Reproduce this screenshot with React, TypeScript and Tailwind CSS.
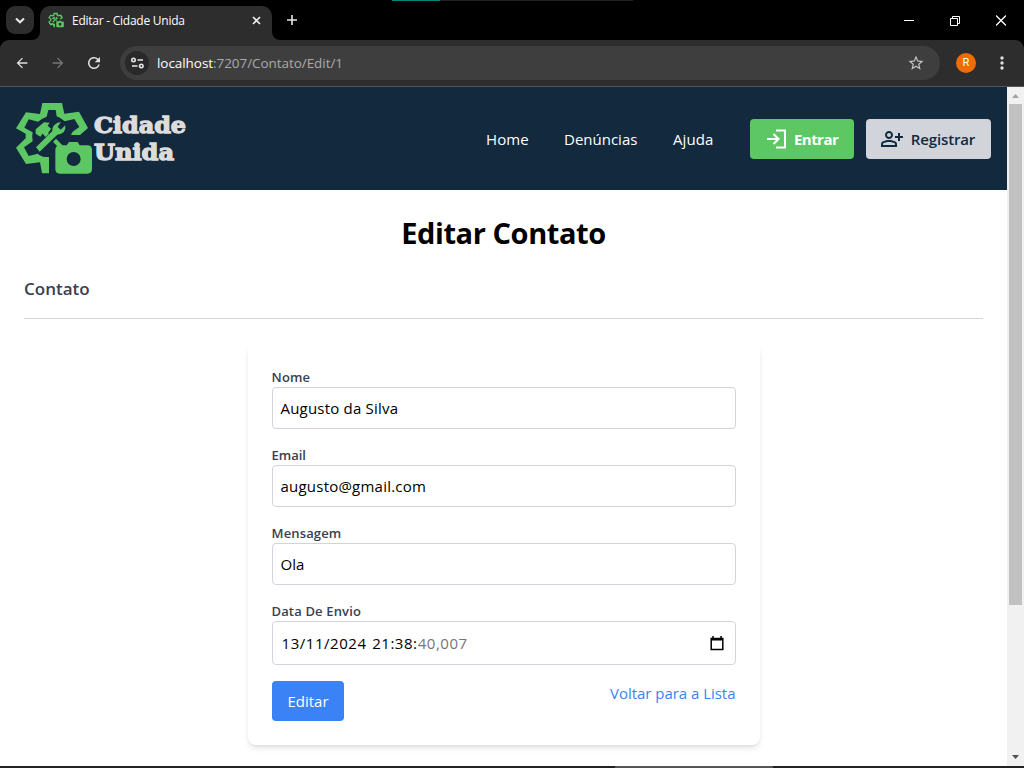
import type { ReactNode } from "react";
import { MdArrowBack, MdArrowForward, MdRefresh, MdStarBorder, MdOutlinePersonAddAlt } from "react-icons/md";

function GearCamera({ className }: { className: string }) {
  return (
    <svg viewBox="45 48 234 219" className={className} fill="#5cc763">
      <path d="M127 51H186L193 83L237 77L264 126L240 147H213Q216 137 222 134L238 123L223 99L194 106Q184 96 170 91L167 72H145L140 92Q127 96 114 107L86 100L73 125L98 139Q95 150 98 166L72 184L86 210L113 203Q126 215 147 213V262H126L120 229L78 234L48 185L77 157V143L48 127L78 79L120 84Z" />
      <path d="M107 143L107 130L132 109L149 110L143 119L153 128L143 143L133 135L121 152Z" />
      <path d="M108 184L157 135Q156 112 183 108L173 122L182 131L196 118Q199 144 172 146L119 197Z" />
      <path d="M133 131L147 143L137 153L124 139ZM168 158L189 179L180 188L159 168Z" />
      <path
        fillRule="evenodd"
        d="M180 178H200L207 168H233L239 178H262Q276 178 276 192V249Q276 263 262 263H180Q166 263 166 249V192Q166 178 180 178ZM221 198A21 21 0 1 0 221 240A21 21 0 1 0 221 198Z"
      />
    </svg>
  );
}

function Field({ label, labelClass, children }: { label: string; labelClass: string; children: ReactNode }) {
  return (
    <div className="mb-4">
      <label className={`block h-5 text-[13px] font-semibold leading-5 whitespace-nowrap text-[#374151] ${labelClass}`}>{label}</label>
      <div className="flex items-center rounded border border-[#d1d5db] px-2 py-2 text-[15px] leading-6 text-black">{children}</div>
    </div>
  );
}

function BrowserChrome() {
  return (
    <div className="shrink-0 bg-black">
      <div className="relative flex h-10 items-end">
        <div className="absolute top-0 left-[392px] flex h-px w-[241px] bg-[#222]">
          <div className="w-12 bg-[#078282]" />
        </div>
        <div className="mb-1.5 ml-1.5 flex size-7 items-center justify-center rounded-[9px] bg-[#2d2d2d]">
          <svg width="10" height="7" fill="none" stroke="#e8e8e8" strokeWidth="2"><path d="M1 1.5L5 5.3L9 1.5" /></svg>
        </div>
        <div className="relative ml-1.5 flex h-[34px] w-[232px] items-center rounded-t-[10px] bg-[#2d2d2d] pb-1.5 pl-2">
          <svg className="absolute bottom-0 -left-2" width="8" height="8" fill="#2d2d2d"><path d="M8 0V8H0A8 8 0 0 0 8 0" /></svg>
          <svg className="absolute -right-2 bottom-0" width="8" height="8" fill="#2d2d2d"><path d="M0 0V8H8A8 8 0 0 1 0 0" /></svg>
          <GearCamera className="h-4 w-4" />
          <span className="ml-2 w-[170px] pt-px text-[12px] tracking-[-0.25px] whitespace-nowrap text-white">Editar - Cidade Unida</span>
          <svg className="ml-[9.5px]" width="9" height="9" stroke="#eee" strokeWidth="1.6"><path d="M1 1L8 8M8 1L1 8" /></svg>
        </div>
        <svg className="mb-[15px] ml-[15px]" width="10" height="10" stroke="#e8e8e8" strokeWidth="1.6"><path d="M5 0V10M0 5H10" /></svg>
        <div className="mb-[14px] ml-auto flex items-center gap-9 pr-[18px]">
          <svg width="10" height="11" stroke="#fff"><path d="M0 5.5H10" /></svg>
          <svg width="10" height="11" fill="none" stroke="#fff"><path d="M.5 3.5H7.5V10.5H.5ZM2.5 3V1.5H9.5V8.5H8" /></svg>
          <svg width="10" height="11" stroke="#fff" strokeWidth="1.3"><path d="M0 .5L10 10.5M10 .5L0 10.5" /></svg>
        </div>
      </div>
      <div className="flex h-[47px] items-center rounded-t-[9px] border-b border-[#555] bg-[#2d2d2d] pl-3.5 text-[#e0e0e0]">
        <MdArrowBack className="size-4" />
        <MdArrowForward className="ml-5 size-4 text-[#777]" />
        <MdRefresh className="ml-[19px] size-[18px]" />
        <div className="ml-[17px] flex h-[34px] w-[820px] items-center rounded-full bg-[#3e3e3e] pl-[5px]">
          <div className="flex size-6 items-center justify-center rounded-full bg-[#292929]">
            <svg width="13" height="12" fill="none" stroke="#e8e8e8" strokeWidth="1.6">
              <circle cx="2.5" cy="3" r="1.7" /><path d="M6.5 3H12M1 9H6.5" /><circle cx="10.3" cy="9" r="1.7" />
            </svg>
          </div>
          <div className="ml-2 text-[13.5px] tracking-[-0.06px] whitespace-nowrap text-[#aaa]"><span className="text-white">localhost</span>:7207/Contato/Edit/1</div>
          <MdStarBorder className="mr-[15px] ml-auto size-[18px] text-[#c4c4c4]" />
        </div>
        <div className="ml-4 flex size-5 items-center justify-center rounded-full bg-[#ef6c00] font-[Roboto] text-[11px] text-white">R</div>
        <svg className="ml-6" width="4" height="16" fill="#e0e0e0"><circle cx="2" cy="3" r="1.7" /><circle cx="2" cy="8" r="1.7" /><circle cx="2" cy="13" r="1.7" /></svg>
      </div>
    </div>
  );
}

function SiteHeader() {
  return (
    <header className="flex h-[103px] items-center bg-[#13293d] pr-4 pl-[15px] text-[15px] text-white">
      <GearCamera className="h-[73px] w-[78px]" />
      <svg width="96" height="60" className="text-[22px] font-bold" fill="#dcdcdc" stroke="#dcdcdc" strokeWidth="1.3" fontFamily="DejaVu Serif, serif">
        <text x="1" y="23.5" textLength="92" lengthAdjust="spacingAndGlyphs">Cidade</text>
        <text x="1" y="51" textLength="80" lengthAdjust="spacingAndGlyphs">Unida</text>
      </svg>
      <nav className="ml-auto flex gap-9 pt-0.5 whitespace-nowrap">
        <a className="w-[42px] tracking-[0.1px]">Home</a>
        <a className="w-[73px]">Denúncias</a>
        <a className="w-[41px] tracking-[0.1px]">Ajuda</a>
      </nav>
      <button className="ml-9 flex h-10 w-[104px] items-center rounded bg-[#5cc763] pl-4 font-bold">
        <svg width="20" height="20" fill="none" stroke="#fff" strokeWidth="2.1"><path d="M10 1.5H19V18.5H10M1 10H12M7.5 5L12.5 10L7.5 15" /></svg>
        <span className="ml-2 w-11 pt-px tracking-[-0.55px]">Entrar</span>
      </button>
      <button className="ml-3 flex h-10 w-[125px] items-center rounded bg-[#d1d5db] pl-3.5 font-semibold text-[#13293d]">
        <MdOutlinePersonAddAlt className="size-6" />
        <span className="ml-1.5 w-[66px] pt-px tracking-[-0.15px]">Registrar</span>
      </button>
    </header>
  );
}

export default function App() {
  return (
    <div className="flex h-screen w-[1024px] flex-col overflow-hidden bg-white font-['Open_Sans','Noto_Sans',sans-serif]">
      <BrowserChrome />
      <div className="flex min-h-0 flex-1">
        <div className="w-[1007px]">
          <SiteHeader />
          <main className="px-6 pt-[25px]">
            <h1 className="text-center text-[29px] leading-9 font-bold tracking-[-0.42px] text-black">Editar Contato</h1>
            <h4 className="mt-6 text-[17px] leading-7 font-semibold text-[#374151]">Contato</h4>
            <hr className="mt-[15px] border-[#d1d5db]" />
            <form className="mx-auto mt-6 w-[512px] rounded-lg bg-white p-6 shadow-md">
              <Field label="Nome" labelClass="tracking-[0.2px]"><span className="tracking-[0.2px]">Augusto da Silva</span></Field>
              <Field label="Email" labelClass=""><span className="tracking-[0.22px]">augusto@gmail.com</span></Field>
              <Field label="Mensagem" labelClass="tracking-[0.15px]"><span>Ola</span></Field>
              <Field label="Data De Envio" labelClass="tracking-[0.15px]">
                <div className="flex h-[26px] flex-1 items-center pl-px tracking-[0.55px]">
                  <span>13/11/2024</span><span className="ml-[5.5px]">21:38:<span className="text-[#757575]">40,007</span></span>
                  <svg className="mr-[3px] ml-auto" width="14" height="15" fill="none" stroke="#000" strokeWidth="1.5"><path d="M1.2 2.5H12.8V13.5H1.2ZM1 3.8H13M3 0V2M11 0V2" /></svg>
                </div>
              </Field>
              <div className="flex items-start justify-between text-[15px] leading-6">
                <button className="h-10 w-[72px] rounded bg-[#3b82f6] pl-px text-white">Editar</button>
                <a className="tracking-[-0.03px] text-[#3b82f6]">Voltar para a Lista</a>
              </div>
            </form>
          </main>
        </div>
        <div className="flex w-[17px] flex-col items-center bg-[#f1f1f1]">
          <svg width="17" height="17" fill="#a3a3a3"><path d="M5 11H12L8.5 7Z" /></svg>
          <div className="mr-0 h-[501px] w-[13px] bg-[#c1c1c1]" />
          <svg className="mt-auto" width="17" height="17" fill="#505050"><path d="M5 6H12L8.5 10Z" /></svg>
        </div>
      </div>
      <div className="flex h-0.5 shrink-0 bg-[#222225]"><div className="ml-[615px] w-[158px] bg-[#565656]" /></div>
    </div>
  );
}
